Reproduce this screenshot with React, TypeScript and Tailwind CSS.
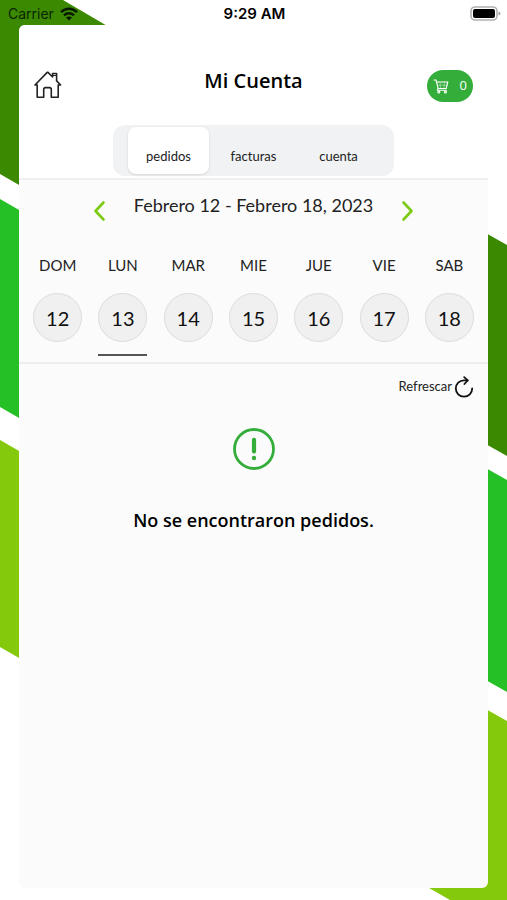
import { useState } from 'react'
import { clsx } from 'clsx'

interface Day {
  label: string
  date: number
}

const days: Day[] = [
  { label: 'DOM', date: 12 },
  { label: 'LUN', date: 13 },
  { label: 'MAR', date: 14 },
  { label: 'MIE', date: 15 },
  { label: 'JUE', date: 16 },
  { label: 'VIE', date: 17 },
  { label: 'SAB', date: 18 },
]

const tabs = ['pedidos', 'facturas', 'cuenta']

function Stripes() {
  return (
    <svg
      className="absolute inset-0 h-full w-full"
      viewBox="0 0 507 900"
      preserveAspectRatio="none"
      aria-hidden="true"
    >
      <g fill="#3a8900">
        <path d="M0 0H63L109 27L40 197L0 174Z" />
        <path d="M468 223L507 245V456L468 434Z" />
      </g>
      <g fill="#25c025">
        <path d="M0 199L40 222V430L0 407Z" />
        <path d="M468 458L507 480V692L468 670Z" />
      </g>
      <g fill="#84c90b">
        <path d="M0 440L40 463V670L0 647Z" />
        <path d="M468 699L507 721V900H450L410 877H468Z" />
      </g>
    </svg>
  )
}

function WifiIcon() {
  return (
    <svg width="18" height="14" viewBox="0 0 18 14" fill="none" stroke="#071a00" strokeWidth="2.4" aria-hidden="true">
      <path d="M1 5.2C5.5 .6 12.5 .6 17 5.2" />
      <path d="M4 8.4C6.8 5.6 11.2 5.6 14 8.4" />
      <path d="M9 13.6L6 10.6C7.6 9 10.4 9 12 10.6Z" fill="#071a00" stroke="none" />
    </svg>
  )
}

function BatteryIcon() {
  return (
    <svg width="31" height="15" viewBox="0 0 31 15" aria-hidden="true">
      <rect x="1" y="1" width="26" height="13" rx="4" fill="#fff" stroke="#b0b0b0" strokeWidth="1.6" />
      <rect x="3" y="3" width="22" height="9" rx="2" fill="#000" />
      <path d="M28.5 5.5Q30.5 6.2 30.5 7.5T28.5 9.5Z" fill="#a0a0a0" />
    </svg>
  )
}

function HomeIcon() {
  return (
    <svg
      width="28"
      height="28"
      viewBox="0 0 28 28"
      fill="none"
      stroke="#222"
      strokeWidth="1.6"
      strokeLinejoin="round"
      strokeLinecap="round"
      aria-hidden="true"
    >
      <path d="M3.2 14V26.2H9.7V18.5Q9.7 16.6 11.5 16.6H15.5Q17.3 16.6 17.3 18.500V26.2H24.2V14H26.6L22.6 9.900V2.500H18.6V6L14 1.400H13.2L1 14H3.2" />
      <path d="M18.6 4.5H22.6" strokeWidth="1" />
    </svg>
  )
}

function CartIcon() {
  return (
    <svg
      width="16"
      height="16"
      viewBox="0 0 16 16"
      fill="none"
      stroke="#fff"
      strokeWidth="1.1"
      strokeLinecap="round"
      strokeLinejoin="round"
      aria-hidden="true"
    >
      <path d="M1 2H3L5.2 10.5H13.2L14.8 4H3.6" />
      <path d="M5.2 10.5L4.3 12.3H13.5" />
      <path d="M4.5 7.2H13.8M7 4.2L7.5 10.3M11.4 4.2L11 10.3" strokeWidth=".4" />
      <circle cx="5.8" cy="14" r="1" />
      <circle cx="12.4" cy="14" r="1" />
    </svg>
  )
}

function Chevron({ d }: { d: string }) {
  return (
    <svg
      width="13"
      height="22"
      viewBox="0 0 13 22"
      fill="none"
      stroke="#7bcb12"
      strokeWidth="2.6"
      strokeLinecap="round"
      strokeLinejoin="round"
      aria-hidden="true"
    >
      <path d={d} />
    </svg>
  )
}

function RefreshIcon() {
  return (
    <svg
      width="20"
      height="22"
      viewBox="0 0 20 22"
      fill="none"
      stroke="#111"
      strokeWidth="1.8"
      strokeLinecap="round"
      strokeLinejoin="round"
      aria-hidden="true"
    >
      <path d="M18.2 12.5A8.2 8.2 0 1 1 10 4.3H13.5" />
      <path d="M10.2 1.2L13.8 4.4L10.4 8" />
    </svg>
  )
}

function AlertIcon() {
  return (
    <svg width="42" height="42" viewBox="0 0 42 42" fill="none" stroke="#35ad3b" aria-hidden="true">
      <circle cx="21" cy="21" r="19.5" strokeWidth="2.8" />
      <path d="M21 11.8V23.5" strokeWidth="4.2" strokeLinecap="round" />
      <circle cx="21" cy="30" r="2.2" fill="#35ad3b" stroke="none" />
    </svg>
  )
}

export default function App() {
  const [tab, setTab] = useState('pedidos')
  const [selected, setSelected] = useState(13)

  return (
    <div className="relative flex min-h-screen flex-col bg-white pb-3 font-['Lato','Open_Sans',sans-serif] text-[#222]">
      <Stripes />

      {/* Status bar */}
      <div className="relative grid h-[27px] grid-cols-3 items-center pr-1.5 pl-2 font-['Inter',sans-serif] text-sm text-black -mb-0.5">
        <div className="flex items-center gap-1.5 text-[#0b2400]">
          Carrier <WifiIcon />
        </div>
        <div className="text-center text-[15px] font-semibold">9:29 AM</div>
        <div className="flex justify-end">
          <BatteryIcon />
        </div>
      </div>

      <main className="relative mx-[19px] flex flex-1 flex-col overflow-hidden rounded-md bg-[#fbfbfb]">
        <header className="border-b-2 border-[#f0f0f0] bg-white pt-10 pb-0.5">
          <div className="grid h-[60px] grid-cols-3 items-start px-[15px]">
            <a href="#inicio" aria-label="Inicio" className="mt-1.5 justify-self-start">
              <HomeIcon />
            </a>
            <h1 className="text-center font-['Open_Sans',sans-serif] text-xl leading-8 font-semibold whitespace-nowrap text-black">
              Mi Cuenta
            </h1>
            <button
              aria-label="Carrito"
              className="mt-[5px] flex h-8 w-[46px] items-center justify-between justify-self-end rounded-full bg-[#35ad3b] px-1.5 font-['Open_Sans',sans-serif] text-[13px] text-white"
            >
              <CartIcon />
              <span>0</span>
            </button>
          </div>

          <div role="tablist" className="mx-auto flex w-[281px] justify-center gap-1 rounded-xl bg-[#f0f2f3] py-0.5">
            {tabs.map((name) => (
              <button
                key={name}
                role="tab"
                aria-selected={tab === name}
                onClick={() => setTab(name)}
                className={clsx(
                  'h-[47px] w-[81px] rounded-lg pt-3 text-[13px]',
                  tab === name && 'bg-white shadow',
                )}
              >
                {name}
              </button>
            ))}
          </div>
        </header>

        {/* Week picker */}
        <section className="border-b-2 border-[#ebeeee] px-1.5 pb-1.5">
          <div className="mx-auto flex h-[62px] w-[322px] justify-between pt-3">
            <button aria-label="Semana anterior" className="mt-2 self-start">
              <Chevron d="M10.5 2.5L2.5 11L10.5 19.5" />
            </button>
            <h2 className="text-lg leading-[26px] whitespace-nowrap">Febrero 12 - Febrero 18, 2023</h2>
            <button aria-label="Semana siguiente" className="mt-2 self-start">
              <Chevron d="M2.5 2.5L10.5 11L2.5 19.5" />
            </button>
          </div>

          <div className="grid grid-cols-7 pt-[11px]">
            {days.map((day) => (
              <button
                key={day.date}
                aria-pressed={selected === day.date}
                onClick={() => setSelected(day.date)}
                className="flex flex-col items-center"
              >
                <span className="text-[15px] leading-6">{day.label}</span>
                <span className="mt-4 flex size-[49px] items-center justify-center rounded-full border border-[#dcdcdc] bg-[#f0f0f0] text-xl text-[#111]">
                  {day.date}
                </span>
                <span className={clsx('mt-3 h-0.5 w-[49px]', selected === day.date && 'bg-[#555]')} />
              </button>
            ))}
          </div>
        </section>

        <button className="mt-3 mr-[14px] flex items-center gap-0.5 self-end text-[13px]">
          Refrescar
          <RefreshIcon />
        </button>

        {/* Empty state */}
        <section className="mt-[30px] flex flex-col items-center gap-9">
          <AlertIcon />
          <p className="font-['Open_Sans',sans-serif] text-lg leading-7 font-semibold text-black">
            No se encontraron pedidos.
          </p>
        </section>
      </main>
    </div>
  )
}
